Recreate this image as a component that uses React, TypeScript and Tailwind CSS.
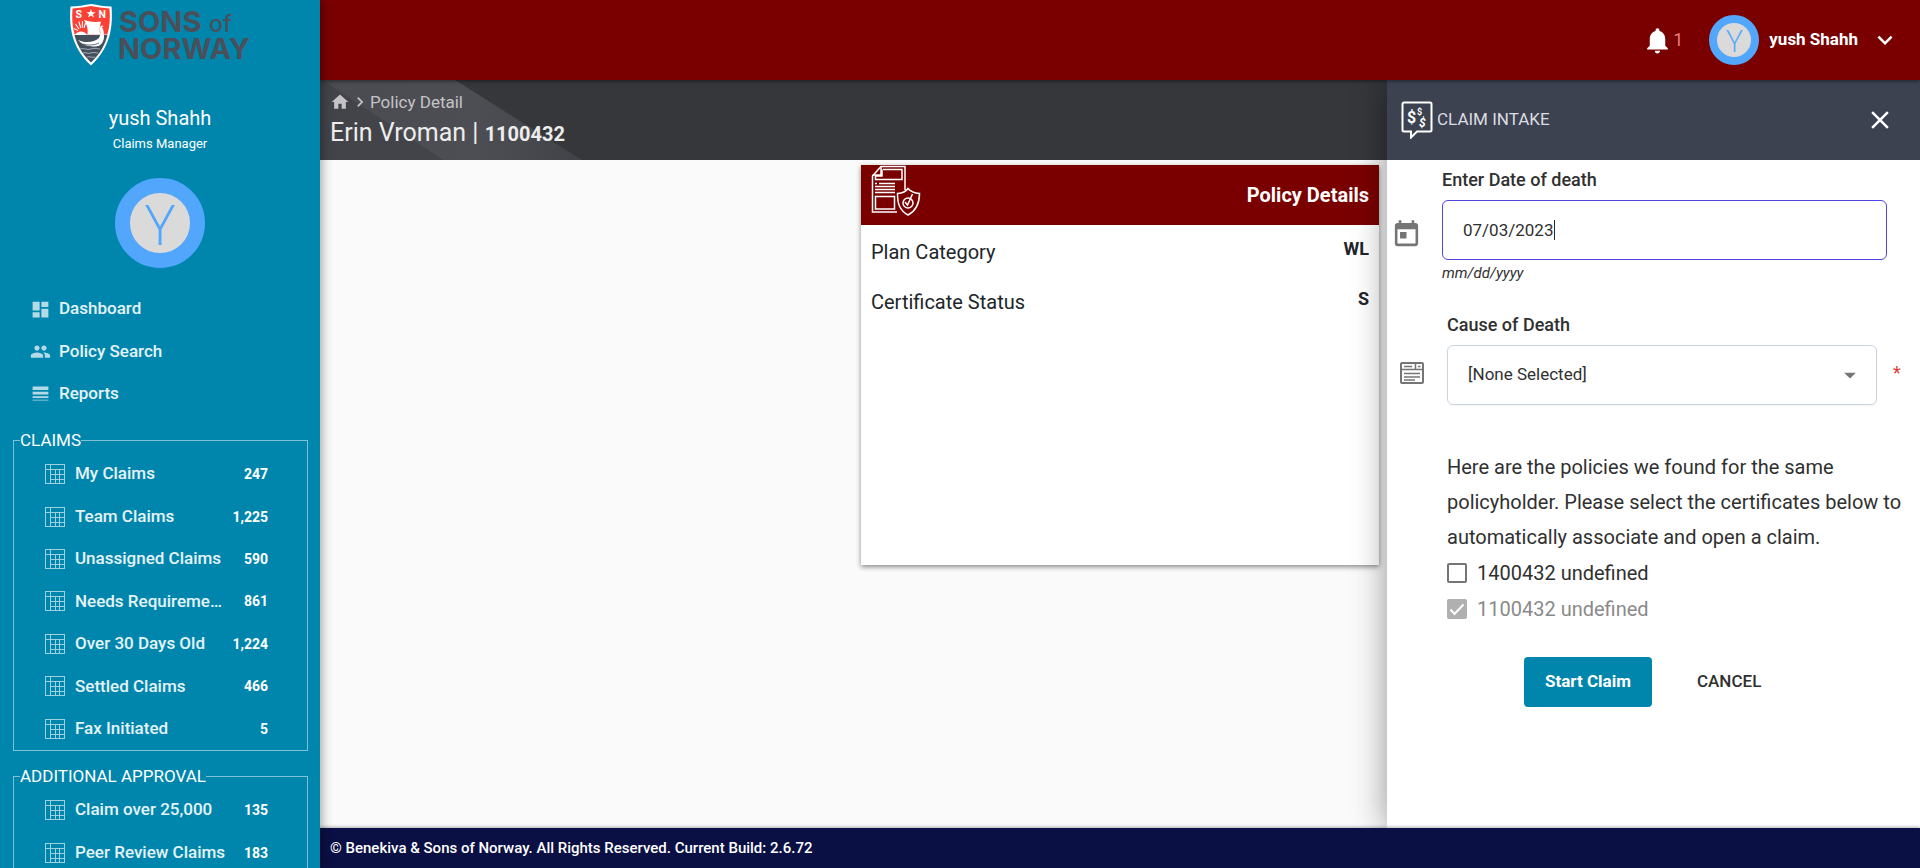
import React, { useState } from "react";
import {
  MdArrowDropDown,
  MdChevronRight,
  MdClose,
  MdDashboard,
  MdExpandMore,
  MdHome,
  MdLineWeight,
  MdNotifications,
  MdPeople,
  MdToday,
} from "react-icons/md";

const claims = [
  { label: "My Claims", count: "247" },
  { label: "Team Claims", count: "1,225" },
  { label: "Unassigned Claims", count: "590" },
  { label: "Needs Requirements", count: "861" },
  { label: "Over 30 Days Old", count: "1,224" },
  { label: "Settled Claims", count: "466" },
  { label: "Fax Initiated", count: "5" },
];

const approvals = [
  { label: "Claim over 25,000", count: "135" },
  { label: "Peer Review Claims", count: "183" },
];

function Logo() {
  return (
    <svg width="182" height="64" viewBox="0 0 182 64" role="img" aria-label="Sons of Norway">
      <path d="M1.5 3.5C9 3.5 15 2 22 1c7 1 13 2.500 20.500 2.500C44 23 42 44 22 62.500 2 44 0 23 1.500 3.500Z" fill="#fff" />
      <path d="M3.500 5.500C10 5.200 16 4 22 3c6 1 12 2.200 18.500 2.500.8 9.500.4 18-2.200 26H5.700C3.200 23.500 2.800 15 3.500 5.500Z" fill="#fb4136" />
      <path d="M5.500 32h33C36 42 31 51 22 59.500 13 51 8 42 5.500 32Z" fill="#454f5b" />
      <path d="M6 32a7 7 0 0 1 12 0Z" fill="#fff" />
      <path
        d="M5 25.500l4 2M6.500 21l3.500 5M9.800 18.500l2 6.500M13.500 18l-.2 6.500M16.500 20l-1.500 5"
        stroke="#fff"
        strokeWidth="1.100"
      />
      <path d="M15 17c6 2 12 2.500 17 1.500-1.500 5-1.500 9-1 13H18.500c.8-5-.5-10-3.500-14.500Z" fill="#fff" />
      <path
        d="M9 37c6 3 16 3 21-2 2-3 1-7 1-10 .5-3 3-3 3.500-1.500l-1.500.5c2 3 2 7 2 11-1 5-4 8.500-9 8.500-8 0-13-2-17-6.500Z"
        fill="#fff"
      />
      <path d="M18 37c2-4 6-5 11-5-1 4-5 5.500-11 5Z" fill="#454f5b" />
      <path d="M14 41c5 1.500 11 1.500 16-1" fill="none" stroke="#454f5b" strokeWidth="0.800" />
      <path
        d="M11 46c4-1.500 7 1.500 11 0s7 0 9 0M14 50c3-1.200 5 1.200 8 0s5 0 7 0M18 54c2-1 5 1 8 0"
        fill="none"
        stroke="#aeb6bd"
        strokeWidth="0.900"
      />
      <path d="m22 6 1.200 3.200h3.400l-2.700 2.100 1 3.300-2.900-2-2.900 2 1-3.300-2.700-2.100h3.400Z" fill="#fff" />
      <g fontFamily="Roboto, sans-serif" fontWeight="700" fontSize="10.500" fill="#fff">
        <text x="6.500" y="14.500">S</text>
        <text x="29.500" y="14.500">N</text>
      </g>
      <g fontFamily="Inter, sans-serif" fill="#4a4f59">
        <text x="50" y="29" fontSize="29" fontWeight="700">SONS</text>
        <text x="140" y="29" fontSize="23" fontWeight="500">of</text>
        <text x="49" y="56" fontSize="29" fontWeight="700">NORWAY</text>
      </g>
    </svg>
  );
}

function GridIcon() {
  return (
    <svg
      className="shrink-0"
      width="20"
      height="20"
      viewBox="0 0 20 20"
      fill="none"
      stroke="#9fd0e0"
      aria-hidden="true"
    >
      <rect x="0.500" y="0.500" width="19" height="19" />
      <path d="M0 5.500h20M5.500 0v20M10.500 5v15M14.500 5v15M5 10.500h15M5 15.500h15" />
    </svg>
  );
}

function DocumentShieldIcon() {
  return (
    <svg width="50" height="52" viewBox="0 0 50 52" fill="none" stroke="#fff" strokeWidth="1.500" aria-hidden="true">
      <path d="M26 47H1.500V11L10 1.500h24V25" />
      <path d="M10 1.500V10H1.500M12 4.500h19v10H4.500v-3.500H11V4.500" />
      <path d="M4 18.500h2M8 18.500h16M4 21.500h20M4 24.500h20M4 27.500h20" />
      <rect x="4.500" y="31.500" width="19" height="12.500" />
      <path d="M37 23.500c-2 3-5 4.500-10.500 5 0 10 2 17 10.500 21.500 8.500-4.500 11.500-12 11.500-21.500-5-.5-8.500-1.500-11.500-5Z" />
      <circle cx="37" cy="38" r="5" />
      <path d="m34 37 2.500 3 5-11" />
    </svg>
  );
}

function MoneyBubbleIcon() {
  return (
    <svg width="32" height="38" viewBox="0 0 32 38" aria-hidden="true">
      <path
        d="M3 1.500h26a1.500 1.500 0 0 1 1.500 1.500v26a1.500 1.500 0 0 1-1.500 1.500H16l-6 6v-6H3A1.500 1.500 0 0 1 1.500 29V3A1.500 1.500 0 0 1 3 1.500Z"
        fill="none"
        stroke="#fff"
        strokeWidth="2"
      />
      <g fontFamily="Roboto, sans-serif" fontWeight="700" fill="#fff">
        <text x="6" y="22" fontSize="16">$</text>
        <text x="16" y="14" fontSize="9">$</text>
        <text x="18" y="26" fontSize="12" fontStyle="italic">$</text>
      </g>
    </svg>
  );
}

function FormIcon() {
  return (
    <svg width="24" height="24" viewBox="0 0 24 24" fill="none" stroke="#757575" strokeWidth="2" aria-hidden="true">
      <rect x="1" y="2" width="22" height="20" rx="1" />
      <path d="M1 8.500h22M15.500 2v6.500M4 5.500h8M18 5.500h2.500M4 12.500h16M4 16h16M4 19h11" strokeWidth="1.500" />
    </svg>
  );
}

function NavRow({ icon, label }: { icon: React.ReactNode; label: string }) {
  return (
    <li className="flex flex-1 items-center">
      <a href="#" className="flex items-center gap-2 pl-[30px] text-[17px] font-medium text-white/90">
        <span className="text-[21px] text-white/70">{icon}</span>
        {label}
      </a>
    </li>
  );
}

function QueueGroup({ title, items, className }: { title: string; items: typeof claims; className: string }) {
  return (
    <fieldset className="mr-3 ml-[13px] min-w-0 border border-[#7fc2d6] px-[6px]">
      <legend className="text-[17px] leading-6 text-white">{title}</legend>
      <ul className={className}>
        {items.map((item) => (
          <li key={item.label} className="flex items-center">
            <a href="#" className="flex w-full items-center pr-[33px] pl-[25px] text-white/90">
              <GridIcon />
              <span className="ml-[10px] w-[153px] shrink-0 truncate text-[17px] font-medium">{item.label}</span>
              <span className="flex-1 text-right text-sm font-bold text-white">{item.count}</span>
            </a>
          </li>
        ))}
      </ul>
    </fieldset>
  );
}

function Sidebar() {
  return (
    <aside className="relative z-30 flex w-80 shrink-0 flex-col overflow-hidden bg-[#0086ad] text-white shadow-[2px_0_10px_rgba(0,0,0,0.35)]">
      <div className="flex justify-center pt-[3px]">
        <Logo />
      </div>
      <div className="mt-[39px] text-center text-xl leading-6">yush Shahh</div>
      <div className="mt-[6px] text-center text-[13px] leading-4">Claims Manager</div>
      <div className="mx-auto mt-[26px] flex size-[90px] shrink-0 items-center justify-center rounded-full border-[15px] border-[#52a6fb] bg-[#dadada] font-['Open_Sans',sans-serif] text-[56px] leading-none font-light text-[#52a6fb]">
        Y
      </div>
      <nav className="mt-5 shrink-0">
        <ul className="flex min-h-[127px] flex-col">
          <NavRow icon={<MdDashboard />} label="Dashboard" />
          <NavRow icon={<MdPeople />} label="Policy Search" />
          <NavRow icon={<MdLineWeight />} label="Reports" />
        </ul>
      </nav>
      <div className="mt-[13px] flex shrink-0 flex-col gap-[13px]">
        <QueueGroup title="CLAIMS" items={claims} className="grid min-h-[298px] auto-rows-fr pt-px" />
        <QueueGroup title="ADDITIONAL APPROVAL" items={approvals} className="grid min-h-[86px] auto-rows-fr" />
      </div>
    </aside>
  );
}

function TopBar() {
  return (
    <header className="relative z-20 flex h-20 shrink-0 items-center justify-end bg-[#7a0000] pr-5 text-white shadow-[0_1px_4px_rgba(0,0,0,0.5)]">
      <button type="button" aria-label="Notifications" className="flex items-center">
        <MdNotifications className="size-[31px]" />
        <span className="text-lg text-[#e57f7f]">1</span>
      </button>
      <button type="button" className="ml-[26px] flex items-center">
        <span className="flex size-[50px] items-center justify-center rounded-full border-8 border-[#52a6fb] bg-[#dadada] font-['Open_Sans',sans-serif] text-[31px] leading-none font-light text-[#52a6fb]">
          Y
        </span>
        <span className="ml-[10px] text-[17px] font-bold">yush Shahh</span>
        <MdExpandMore className="ml-3 size-[30px]" />
      </button>
    </header>
  );
}

function PageHeading() {
  return (
    <div className="relative h-20 shrink-0 overflow-hidden bg-[#36373b] px-[10px] pt-[10px]">
      <svg className="absolute top-0 left-0" width="270" height="80" viewBox="0 0 270 80" aria-hidden="true">
        <defs>
          <linearGradient id="band" x1="0" x2="1">
            <stop offset="0" stopColor="#4b4c51" />
            <stop offset="0.600" stopColor="#4d4e53" />
            <stop offset="1" stopColor="#414247" />
          </linearGradient>
        </defs>
        <path d="M0 0 2 0 123 80H0Z" fill="#434449" />
        <path d="M2 0H135L262 80H123Z" fill="url(#band)" />
      </svg>
      <nav className="relative flex items-center text-[17px] leading-6 text-[#c4c4c6]">
        <MdHome className="size-5" />
        <MdChevronRight className="size-5" />
        <a href="#">Policy Detail</a>
      </nav>
      <h1 className="relative mt-[3px] text-[25px] leading-8 text-[#ededed]">
        Erin Vroman | <b className="text-xl font-bold">1100432</b>
      </h1>
    </div>
  );
}

function PolicyCard() {
  return (
    <section className="h-[400px] w-[518px] bg-white shadow-[0_2px_5px_rgba(0,0,0,0.45)]">
      <div className="flex h-[60px] items-center justify-between bg-[#7a0000] px-[10px]">
        <div className="self-start">
          <DocumentShieldIcon />
        </div>
        <h2 className="text-xl font-bold text-white">Policy Details</h2>
      </div>
      <dl className="px-[10px] pt-2 text-[#212529]">
        <div className="flex h-[50px] justify-between">
          <dt className="pt-[6px] text-xl leading-[26px]">Plan Category</dt>
          <dd className="pt-1 text-lg leading-6 font-bold">WL</dd>
        </div>
        <div className="flex h-[50px] justify-between">
          <dt className="pt-[6px] text-xl leading-[26px]">Certificate Status</dt>
          <dd className="pt-1 text-lg leading-6 font-bold">S</dd>
        </div>
      </dl>
    </section>
  );
}

function ClaimIntake() {
  const [date, setDate] = useState("07/03/2023");
  const [extra, setExtra] = useState(false);
  return (
    <aside className="relative z-10 flex w-[533px] shrink-0 flex-col bg-white shadow-[0_0_32px_rgba(0,0,0,0.42)]">
      <div className="flex h-20 shrink-0 items-center bg-[#3d4251] pr-[25px] pl-[14px] text-white">
        <MoneyBubbleIcon />
        <h2 className="ml-1 text-[17px] text-[#dcdde0]">CLAIM INTAKE</h2>
        <button type="button" aria-label="Close" className="ml-auto">
          <MdClose className="size-[30px]" />
        </button>
      </div>
      <form className="text-[#303030]" onSubmit={(e) => e.preventDefault()}>
        <div className="grid grid-cols-[55px_1fr] pt-2 pr-[33px]">
          <label htmlFor="dod" className="col-start-2 text-lg leading-6 font-medium">
            Enter Date of death
          </label>
          <MdToday className="mt-[27px] ml-1 size-[31px] text-[#757575]" />
          <div className="relative mt-2">
            <input
              id="dod"
              value={date}
              onChange={(e) => setDate(e.target.value)}
              className="h-[60px] w-full rounded-md border border-[#4f46e5] bg-white px-5 text-[17px] outline-none"
            />
            <span className="absolute top-5 left-[112px] h-5 w-px bg-[#1e293b]" />
          </div>
          <p className="col-start-2 mt-[3px] text-[15px] leading-5 italic">mm/dd/yyyy</p>
        </div>

        <div className="mt-[30px] grid grid-cols-[60px_1fr_43px]">
          <label htmlFor="cause" className="col-start-2 text-lg leading-6 font-medium">
            Cause of Death
          </label>
          <div className="col-start-1 mt-4 flex h-[40px] items-center pl-[13px]">
            <FormIcon />
          </div>
          <div className="relative mt-2">
            <select
              id="cause"
              className="h-[60px] w-full appearance-none rounded-md border border-[#cbd5e1] bg-white px-5 text-[17px] shadow-xs"
            >
              <option>[None Selected]</option>
            </select>
            <MdArrowDropDown className="pointer-events-none absolute top-4 right-[13px] size-7 text-[#757575]" />
          </div>
          <span className="mt-6 ml-4 text-lg leading-6 text-[#e53935]">*</span>
        </div>

        <div className="mt-[45px] pr-4 pl-[60px] text-xl leading-[35px]">
          <p>
            Here are the policies we found for the same policyholder. Please select the certificates below to
            automatically associate and open a claim.
          </p>
          <label className="flex h-9 items-center gap-[10px]">
            <input
              type="checkbox"
              checked={extra}
              onChange={(e) => setExtra(e.target.checked)}
              className="size-5 appearance-none rounded-xs border-2 border-[#757575] checked:bg-[#757575]"
            />
            1400432 undefined
          </label>
          <label className="flex h-9 items-center gap-[10px] text-[#8a8a8a]">
            <span className="relative flex">
              <input type="checkbox" checked readOnly disabled className="size-5 appearance-none rounded-xs bg-[#b0b0b0]" />
              <svg className="absolute inset-0" width="20" height="20" viewBox="0 0 20 20" fill="none" stroke="#fff" strokeWidth="2">
                <path d="m3.500 10.500 4 4.500 9-9.500" />
              </svg>
            </span>
            1100432 undefined
          </label>
        </div>

        <div className="mt-[30px] flex pl-[137px]">
          <button type="submit" className="h-[50px] min-w-32 rounded bg-[#0086ad] px-5 text-[17px] font-bold text-white">
            Start Claim
          </button>
          <button type="button" className="ml-[25px] h-[50px] px-5 text-[17px] font-medium">
            CANCEL
          </button>
        </div>
      </form>
    </aside>
  );
}

export default function App() {
  return (
    <div className="flex h-screen overflow-hidden bg-[#fafafa] font-[Roboto,sans-serif]">
      <Sidebar />
      <div className="flex min-w-0 flex-1 flex-col">
        <TopBar />
        <div className="flex min-h-0 flex-1">
          <main className="min-w-0 flex-1">
            <PageHeading />
            <div className="flex justify-end pt-[5px] pr-2">
              <PolicyCard />
            </div>
          </main>
          <ClaimIntake />
        </div>
        <footer className="relative z-20 flex h-10 shrink-0 items-center bg-[#0a0f44] px-[10px] text-[15px] font-medium text-white shadow-[0_-1px_3px_rgba(0,0,0,0.3)]">
          © Benekiva &amp; Sons of Norway. All Rights Reserved. Current Build: 2.6.72
        </footer>
      </div>
    </div>
  );
}
